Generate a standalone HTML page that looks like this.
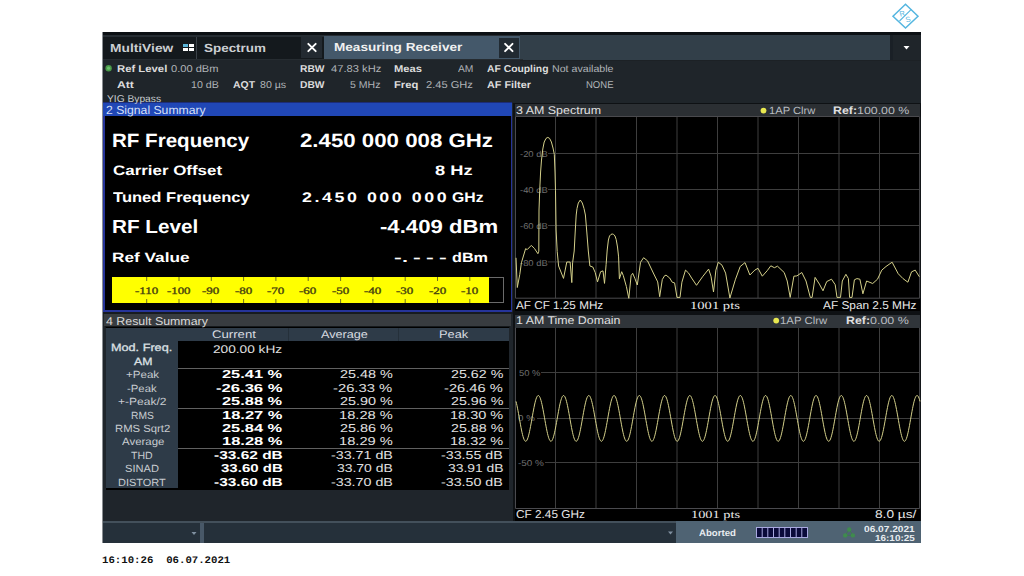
<!DOCTYPE html>
<html><head><meta charset="utf-8"><style>
html,body{margin:0;padding:0;width:1024px;height:576px;overflow:hidden;background:#fff}
#r>div{position:absolute}
.t{position:absolute;line-height:20px;white-space:pre;transform-origin:0 0;text-rendering:geometricPrecision}
svg{position:absolute;left:0;top:0}
</style></head><body><div id="r">
<div style="left:103px;top:32px;width:818px;height:511px;background:#1f252a;"></div>
<div style="left:103px;top:32px;width:818px;height:3px;background:#0c1014;"></div>
<div style="left:103px;top:35px;width:420px;height:2px;background:#262d33;"></div>
<div style="left:103px;top:37px;width:420px;height:22px;background:#14191d;"></div>
<div style="left:196px;top:37px;width:1px;height:22px;background:#3a4148;"></div>
<div style="left:301px;top:37px;width:21px;height:21px;background:#232a31;"></div>
<div style="left:324px;top:36px;width:196px;height:23px;background:#44586a;"></div>
<div style="left:499px;top:38px;width:20px;height:20px;background:#212a32;"></div>
<div style="left:520px;top:35px;width:370px;height:25px;background:#323f49;"></div>
<div style="left:890px;top:35px;width:31px;height:25px;background:#1f252a;"></div>
<div style="left:890px;top:35px;width:3px;height:25px;background:#1a2026;"></div>
<div style="left:103px;top:59px;width:420px;height:1px;background:#262c31;"></div>
<div style="left:520px;top:60px;width:401px;height:1px;background:#1c2125;"></div>
<div style="left:102px;top:102px;width:410px;height:211px;background:#1a1e22;"></div>
<div style="left:103px;top:102px;width:409px;height:210px;background:#26349a;"></div>
<div style="left:105px;top:116px;width:406px;height:194px;background:#000000;"></div>
<div style="left:103px;top:102px;width:409px;height:1px;background:#1c2c78;"></div>
<div style="left:103px;top:103px;width:409px;height:13px;background:#2047b6;"></div>
<div style="left:513px;top:103px;width:408px;height:209px;background:#0e1114;"></div>
<div style="left:515px;top:104px;width:405px;height:12px;background:#2b2f33;"></div>
<div style="left:515px;top:116px;width:405px;height:195px;background:#000000;"></div>
<div style="left:102px;top:312px;width:411px;height:209px;background:#1f252b;"></div>
<div style="left:102px;top:312px;width:411px;height:2px;background:#171b1f;"></div>
<div style="left:104px;top:314px;width:407px;height:12px;background:#383c40;"></div>
<div style="left:105px;top:326px;width:405px;height:2px;background:#15191c;"></div>
<div style="left:106px;top:327px;width:403px;height:163px;background:#000000;"></div>
<div style="left:106px;top:328px;width:72px;height:160px;background:#2e3b48;"></div>
<div style="left:178px;top:328px;width:331px;height:13px;background:#2e3b48;"></div>
<div style="left:288px;top:328px;width:1px;height:13px;background:#25303a;"></div>
<div style="left:398px;top:328px;width:1px;height:13px;background:#25303a;"></div>
<div style="left:178px;top:368px;width:331px;height:1px;background:#606060;"></div>
<div style="left:178px;top:408px;width:331px;height:1px;background:#606060;"></div>
<div style="left:178px;top:448px;width:331px;height:1px;background:#606060;"></div>
<div style="left:513px;top:312px;width:408px;height:209px;background:#0e1114;"></div>
<div style="left:515px;top:314.5px;width:405px;height:13.3px;background:#30353a;"></div>
<div style="left:515px;top:327.8px;width:405px;height:193.2px;background:#000000;"></div>
<div style="left:103px;top:521px;width:818px;height:22px;background:#25303a;"></div>
<div style="left:103px;top:521px;width:818px;height:2px;background:#43505b;"></div>
<div style="left:200px;top:523px;width:4px;height:20px;background:#485868;"></div>
<div style="left:676px;top:521px;width:245px;height:22px;background:#4f6373;"></div>
<div style="left:112px;top:277px;width:392px;height:26px;background:#6a6a6a;"></div>
<div style="left:112px;top:277px;width:377px;height:26px;background:#ffff00;"></div>
<div style="left:489px;top:278px;width:14px;height:24px;background:#000000;"></div>
<div style="left:102px;top:32px;width:1px;height:511px;background:#8a8e92;"></div>
</div>
<svg width="1024" height="576" viewBox="0 0 1024 576"><path d="M905.5 4.2 L918 16.3 L905.5 28 L893 16.3 Z" fill="none" stroke="#55b6e0" stroke-width="1.5"/><path d="M911.3 9.3 L899.5 21" stroke="#55b6e0" stroke-width="1.1"/><text x="0" y="0" transform="translate(900.2 16.8) rotate(-15)" font-family="Liberation Sans" font-size="7.5" fill="#55b6e0">R</text><text x="0" y="0" transform="translate(906.2 22.6) rotate(-15)" font-family="Liberation Sans" font-size="7.5" fill="#55b6e0">S</text><path d="M903.5 46 L909.5 46 L906.5 49.5 Z" fill="#ffffff"/><path d="M191.5 532 L196.5 532 L194 535 Z" fill="#8090a0"/><path d="M668 531.5 L673 531.5 L670.5 534.5 Z" fill="#8090a0"/><g stroke="#ffffff" stroke-width="1.9" stroke-linecap="round"><path d="M308.3 43.8 L315.7 51.2 M315.7 43.8 L308.3 51.2"/><path d="M505.1 43.8 L512.5 51.2 M512.5 43.8 L505.1 51.2"/></g><rect x="183" y="44" width="5" height="3" fill="#5ab4d8"/><rect x="189" y="44" width="5" height="3" fill="#fff"/><rect x="183" y="48" width="5" height="3" fill="#fff"/><rect x="189" y="48" width="5" height="3" fill="#fff"/><circle cx="108.6" cy="68.2" r="3.2" fill="#4a9a4a"/><circle cx="108.6" cy="68.2" r="1.6" fill="#6cc06c"/><circle cx="763.5" cy="110.6" r="2.9" fill="#e8e850"/><circle cx="776.2" cy="320.6" r="2.9" fill="#e8e850"/><path d="M146.7 277 V281 M146.7 299 V303 M179.0 277 V281 M179.0 299 V303 M211.3 277 V281 M211.3 299 V303 M243.6 277 V281 M243.6 299 V303 M275.9 277 V281 M275.9 299 V303 M308.2 277 V281 M308.2 299 V303 M340.6 277 V281 M340.6 299 V303 M372.9 277 V281 M372.9 299 V303 M405.2 277 V281 M405.2 299 V303 M437.5 277 V281 M437.5 299 V303 M469.8 277 V281 M469.8 299 V303 " stroke="#707020" stroke-width="1" fill="none"/><path d="M555.50 116.5 V298.2 M596.00 116.5 V298.2 M636.50 116.5 V298.2 M677.00 116.5 V298.2 M717.50 116.5 V298.2 M758.00 116.5 V298.2 M798.50 116.5 V298.2 M839.00 116.5 V298.2 M879.50 116.5 V298.2 M515.5 153.5 H919.6 M515.5 189.5 H919.6 M515.5 225.5 H919.6 M515.5 261.9 H919.6 M555.50 327.8 V508.5 M596.00 327.8 V508.5 M636.50 327.8 V508.5 M677.00 327.8 V508.5 M717.50 327.8 V508.5 M758.00 327.8 V508.5 M798.50 327.8 V508.5 M839.00 327.8 V508.5 M879.50 327.8 V508.5 M515.5 372.5 H919.6 M515.5 418.5 H919.6 M515.5 462.5 H919.6 " stroke="#3e3e3e" stroke-width="1" fill="none"/><path d="M515.5 116.5 V298.2 M515.5 116.5 H919.6 M515.5 298.2 H919.6 M919.6 116.5 V298.2 M515.5 327.8 V508.5 M515.5 508.5 H919.6 M919.6 327.8 V508.5 " stroke="#4a4a4e" stroke-width="1" fill="none"/><rect x="756.5" y="527.5" width="51" height="10" fill="#0a0a3a" stroke="#a8a8e0" stroke-width="1"/><path d="M762.2 527.5 V537.5" stroke="#a8a8e0" stroke-width="1"/><path d="M767.8 527.5 V537.5" stroke="#a8a8e0" stroke-width="1"/><path d="M773.5 527.5 V537.5" stroke="#a8a8e0" stroke-width="1"/><path d="M779.2 527.5 V537.5" stroke="#a8a8e0" stroke-width="1"/><path d="M784.8 527.5 V537.5" stroke="#a8a8e0" stroke-width="1"/><path d="M790.5 527.5 V537.5" stroke="#a8a8e0" stroke-width="1"/><path d="M796.2 527.5 V537.5" stroke="#a8a8e0" stroke-width="1"/><path d="M801.8 527.5 V537.5" stroke="#a8a8e0" stroke-width="1"/><path d="M849.2 529.5 L845.2 535.4 M849.2 529.5 L852.9 535.4 M845.2 535.4 H852.9" stroke="#3d7a50" stroke-width="1" fill="none"/><g fill="#3f8f4c" opacity="0.9"><circle cx="849.2" cy="529.5" r="2.2"/><circle cx="845.2" cy="535.4" r="2.2"/><circle cx="852.9" cy="535.4" r="2.2"/></g></svg>
<div style="position:absolute;left:516px;top:148px;width:32px;height:10px;background:#000000"></div>
<div style="position:absolute;left:516px;top:185px;width:32px;height:10px;background:#000000"></div>
<div style="position:absolute;left:516px;top:221px;width:32px;height:10px;background:#000000"></div>
<div style="position:absolute;left:516px;top:257px;width:32px;height:10px;background:#000000"></div>
<div style="position:absolute;left:516px;top:367px;width:25px;height:10px;background:#000000"></div>
<div style="position:absolute;left:516px;top:413px;width:21px;height:10px;background:#000000"></div>
<div style="position:absolute;left:516px;top:458px;width:29px;height:10px;background:#000000"></div>
<span class="t" style="left:109.86px;top:38px;color:#cccfd2;font-family:'Liberation Sans', sans-serif;font-size:11.8px;font-weight:700;transform:scaleX(1.1672);">MultiView</span>
<span class="t" style="left:203.82px;top:38px;color:#cccfd2;font-family:'Liberation Sans', sans-serif;font-size:11.8px;font-weight:700;transform:scaleX(1.1382);">Spectrum</span>
<span class="t" style="left:333.67px;top:37px;color:#f0f0f0;font-family:'Liberation Sans', sans-serif;font-size:11.8px;font-weight:700;transform:scaleX(1.1507);">Measuring Receiver</span>
<span class="t" style="left:116.89px;top:60px;color:#dcdcdc;font-family:'Liberation Sans', sans-serif;font-size:10px;font-weight:700;transform:scaleX(1.1314);">Ref Level</span>
<span class="t" style="left:171.13px;top:60px;color:#b0b4b8;font-family:'Liberation Sans', sans-serif;font-size:10px;transform:scaleX(1.1091);">0.00 dBm</span>
<span class="t" style="left:117.10px;top:76px;color:#dcdcdc;font-family:'Liberation Sans', sans-serif;font-size:10px;font-weight:700;transform:scaleX(1.2182);">Att</span>
<span class="t" style="left:190.81px;top:76px;color:#b0b4b8;font-family:'Liberation Sans', sans-serif;font-size:10px;transform:scaleX(1.0656);">10 dB</span>
<span class="t" style="left:232.77px;top:76px;color:#dcdcdc;font-family:'Liberation Sans', sans-serif;font-size:10px;font-weight:700;transform:scaleX(1.0424);">AQT</span>
<span class="t" style="left:259.94px;top:76px;color:#b0b4b8;font-family:'Liberation Sans', sans-serif;font-size:10px;transform:scaleX(1.0601);">80 µs</span>
<span class="t" style="left:299.65px;top:60px;color:#dcdcdc;font-family:'Liberation Sans', sans-serif;font-size:10px;font-weight:700;transform:scaleX(1.0268);">RBW</span>
<span class="t" style="left:330.51px;top:60px;color:#b0b4b8;font-family:'Liberation Sans', sans-serif;font-size:10px;transform:scaleX(1.1170);">47.83 kHz</span>
<span class="t" style="left:299.65px;top:76px;color:#dcdcdc;font-family:'Liberation Sans', sans-serif;font-size:10px;font-weight:700;transform:scaleX(1.0268);">DBW</span>
<span class="t" style="left:350.23px;top:76px;color:#b0b4b8;font-family:'Liberation Sans', sans-serif;font-size:10px;transform:scaleX(1.0522);">5 MHz</span>
<span class="t" style="left:393.59px;top:60px;color:#dcdcdc;font-family:'Liberation Sans', sans-serif;font-size:10px;font-weight:700;transform:scaleX(1.1168);">Meas</span>
<span class="t" style="left:457.68px;top:60px;color:#b0b4b8;font-family:'Liberation Sans', sans-serif;font-size:10px;transform:scaleX(1.0285);">AM</span>
<span class="t" style="left:393.59px;top:76px;color:#dcdcdc;font-family:'Liberation Sans', sans-serif;font-size:10px;font-weight:700;transform:scaleX(1.1243);">Freq</span>
<span class="t" style="left:426.21px;top:76px;color:#b0b4b8;font-family:'Liberation Sans', sans-serif;font-size:10px;transform:scaleX(1.1105);">2.45 GHz</span>
<span class="t" style="left:486.57px;top:60px;color:#dcdcdc;font-family:'Liberation Sans', sans-serif;font-size:10px;font-weight:700;transform:scaleX(1.0351);">AF Coupling</span>
<span class="t" style="left:551.91px;top:60px;color:#b0b4b8;font-family:'Liberation Sans', sans-serif;font-size:10px;transform:scaleX(1.0643);">Not available</span>
<span class="t" style="left:486.55px;top:76px;color:#dcdcdc;font-family:'Liberation Sans', sans-serif;font-size:10px;font-weight:700;transform:scaleX(1.0828);">AF Filter</span>
<span class="t" style="left:585.89px;top:76px;color:#b0b4b8;font-family:'Liberation Sans', sans-serif;font-size:10px;transform:scaleX(0.9517);">NONE</span>
<span class="t" style="left:107.31px;top:90px;color:#c8ccd0;font-family:'Liberation Sans', sans-serif;font-size:10px;transform:scaleX(1.0229);">YIG Bypass</span>
<span class="t" style="left:106.41px;top:100px;color:#d8e0f8;font-family:'Liberation Sans', sans-serif;font-size:11.8px;transform:scaleX(1.0343);">2 Signal Summary</span>
<span class="t" style="left:112.37px;top:132px;color:#fff;font-family:'Liberation Sans', sans-serif;font-size:19.3px;font-weight:700;transform:scaleX(1.0665);">RF Frequency</span>
<span class="t" style="left:299.87px;top:132px;color:#fff;font-family:'Liberation Sans', sans-serif;font-size:19.3px;font-weight:700;transform:scaleX(1.1540);">2.450 000 008 GHz</span>
<span class="t" style="left:112.74px;top:161px;color:#fff;font-family:'Liberation Sans', sans-serif;font-size:13.7px;font-weight:700;transform:scaleX(1.2360);">Carrier Offset</span>
<span class="t" style="left:435.20px;top:161px;color:#fff;font-family:'Liberation Sans', sans-serif;font-size:13.7px;font-weight:700;transform:scaleX(1.3352);">8 Hz</span>
<span class="t" style="left:113.08px;top:187px;color:#fff;font-family:'Liberation Sans', sans-serif;font-size:14.1px;font-weight:700;transform:scaleX(1.1744);">Tuned Frequency</span>
<span class="t" style="left:301.82px;top:188px;color:#fff;font-family:'Liberation Sans', sans-serif;font-size:13.8px;font-weight:700;letter-spacing:2.0px;transform:scaleX(1.2888);">2.450 000 000</span>
<span class="t" style="left:452.19px;top:188px;color:#fff;font-family:'Liberation Sans', sans-serif;font-size:13.8px;font-weight:700;transform:scaleX(1.1449);">GHz</span>
<span class="t" style="left:112.20px;top:218px;color:#fff;font-family:'Liberation Sans', sans-serif;font-size:18.9px;font-weight:700;transform:scaleX(1.0956);">RF Level</span>
<span class="t" style="left:380.30px;top:218px;color:#fff;font-family:'Liberation Sans', sans-serif;font-size:18.9px;font-weight:700;transform:scaleX(1.1720);">-4.409 dBm</span>
<span class="t" style="left:111.95px;top:248px;color:#fff;font-family:'Liberation Sans', sans-serif;font-size:13.5px;font-weight:700;transform:scaleX(1.2767);">Ref Value</span>
<span class="t" style="left:393.74px;top:248px;color:#fff;font-family:'Liberation Sans', sans-serif;font-size:13.5px;font-weight:700;transform:scaleX(1.7214);">-</span>
<span class="t" style="left:413.24px;top:248px;color:#fff;font-family:'Liberation Sans', sans-serif;font-size:13.5px;font-weight:700;transform:scaleX(1.7214);">-</span>
<span class="t" style="left:425.94px;top:248px;color:#fff;font-family:'Liberation Sans', sans-serif;font-size:13.5px;font-weight:700;transform:scaleX(1.7214);">-</span>
<span class="t" style="left:438.64px;top:248px;color:#fff;font-family:'Liberation Sans', sans-serif;font-size:13.5px;font-weight:700;transform:scaleX(1.7214);">-</span>
<span class="t" style="left:401.67px;top:248px;color:#fff;font-family:'Liberation Sans', sans-serif;font-size:13.5px;font-weight:700;transform:scaleX(1.6076);">.</span>
<span class="t" style="left:452.16px;top:248px;color:#fff;font-family:'Liberation Sans', sans-serif;font-size:13.5px;font-weight:700;transform:scaleX(1.2007);">dBm</span>
<span class="t" style="left:134.70px;top:282px;color:#48440e;font-family:'Liberation Serif', serif;font-size:9.8px;-webkit-text-stroke:0.35px #48440e;transform:scaleX(1.3268);">-110</span>
<span class="t" style="left:167.02px;top:282px;color:#48440e;font-family:'Liberation Serif', serif;font-size:9.8px;-webkit-text-stroke:0.35px #48440e;transform:scaleX(1.3113);">-100</span>
<span class="t" style="left:202.42px;top:282px;color:#48440e;font-family:'Liberation Serif', serif;font-size:9.8px;-webkit-text-stroke:0.35px #48440e;transform:scaleX(1.3292);">-90</span>
<span class="t" style="left:234.73px;top:282px;color:#48440e;font-family:'Liberation Serif', serif;font-size:9.8px;-webkit-text-stroke:0.35px #48440e;transform:scaleX(1.3292);">-80</span>
<span class="t" style="left:267.04px;top:282px;color:#48440e;font-family:'Liberation Serif', serif;font-size:9.8px;-webkit-text-stroke:0.35px #48440e;transform:scaleX(1.3292);">-70</span>
<span class="t" style="left:299.35px;top:282px;color:#48440e;font-family:'Liberation Serif', serif;font-size:9.8px;-webkit-text-stroke:0.35px #48440e;transform:scaleX(1.3292);">-60</span>
<span class="t" style="left:331.66px;top:282px;color:#48440e;font-family:'Liberation Serif', serif;font-size:9.8px;-webkit-text-stroke:0.35px #48440e;transform:scaleX(1.3292);">-50</span>
<span class="t" style="left:363.97px;top:282px;color:#48440e;font-family:'Liberation Serif', serif;font-size:9.8px;-webkit-text-stroke:0.35px #48440e;transform:scaleX(1.3292);">-40</span>
<span class="t" style="left:396.28px;top:282px;color:#48440e;font-family:'Liberation Serif', serif;font-size:9.8px;-webkit-text-stroke:0.35px #48440e;transform:scaleX(1.3292);">-30</span>
<span class="t" style="left:428.59px;top:282px;color:#48440e;font-family:'Liberation Serif', serif;font-size:9.8px;-webkit-text-stroke:0.35px #48440e;transform:scaleX(1.3292);">-20</span>
<span class="t" style="left:460.90px;top:282px;color:#48440e;font-family:'Liberation Serif', serif;font-size:9.8px;-webkit-text-stroke:0.35px #48440e;transform:scaleX(1.3292);">-10</span>
<span class="t" style="left:105.81px;top:312px;color:#d8d8d8;font-family:'Liberation Sans', sans-serif;font-size:11.3px;transform:scaleX(1.0967);">4 Result Summary</span>
<span class="t" style="left:211.56px;top:325px;color:#d8dce0;font-family:'Liberation Sans', sans-serif;font-size:11px;transform:scaleX(1.1963);">Current</span>
<span class="t" style="left:320.67px;top:325px;color:#d8dce0;font-family:'Liberation Sans', sans-serif;font-size:11px;transform:scaleX(1.1506);">Average</span>
<span class="t" style="left:438.72px;top:325px;color:#d8dce0;font-family:'Liberation Sans', sans-serif;font-size:11px;transform:scaleX(1.1651);">Peak</span>
<span class="t" style="left:111.22px;top:338px;color:#dce0e4;font-family:'Liberation Sans', sans-serif;font-size:10.6px;-webkit-text-stroke:0.3px #dce0e4;transform:scaleX(1.1945);">Mod. Freq.</span>
<span class="t" style="left:133.87px;top:352px;color:#dce0e4;font-family:'Liberation Sans', sans-serif;font-size:10.6px;-webkit-text-stroke:0.3px #dce0e4;transform:scaleX(1.1563);">AM</span>
<span class="t" style="left:212.94px;top:340px;color:#e0e0e0;font-family:'Liberation Sans', sans-serif;font-size:11px;transform:scaleX(1.2419);">200.00 kHz</span>
<span class="t" style="left:125.53px;top:366px;color:#c8ccd0;font-family:'Liberation Sans', sans-serif;font-size:10.4px;transform:scaleX(1.1122);">+Peak</span>
<span class="t" style="left:222.14px;top:365px;color:#fff;font-family:'Liberation Sans', sans-serif;font-size:11.5px;font-weight:700;transform:scaleX(1.4252);">25.41 %</span>
<span class="t" style="left:339.78px;top:365px;color:#e0e0e0;font-family:'Liberation Sans', sans-serif;font-size:11.5px;transform:scaleX(1.2542);">25.48 %</span>
<span class="t" style="left:450.79px;top:365px;color:#e0e0e0;font-family:'Liberation Sans', sans-serif;font-size:11.5px;transform:scaleX(1.2396);">25.62 %</span>
<span class="t" style="left:127.21px;top:380px;color:#c8ccd0;font-family:'Liberation Sans', sans-serif;font-size:10.4px;transform:scaleX(1.0907);">-Peak</span>
<span class="t" style="left:215.73px;top:379px;color:#fff;font-family:'Liberation Sans', sans-serif;font-size:11.5px;font-weight:700;transform:scaleX(1.4446);">-26.36 %</span>
<span class="t" style="left:333.46px;top:379px;color:#e0e0e0;font-family:'Liberation Sans', sans-serif;font-size:11.5px;transform:scaleX(1.2857);">-26.33 %</span>
<span class="t" style="left:444.27px;top:379px;color:#e0e0e0;font-family:'Liberation Sans', sans-serif;font-size:11.5px;transform:scaleX(1.2768);">-26.46 %</span>
<span class="t" style="left:118.31px;top:393px;color:#c8ccd0;font-family:'Liberation Sans', sans-serif;font-size:10.4px;transform:scaleX(1.1569);">+-Peak/2</span>
<span class="t" style="left:222.14px;top:392px;color:#fff;font-family:'Liberation Sans', sans-serif;font-size:11.5px;font-weight:700;transform:scaleX(1.4252);">25.88 %</span>
<span class="t" style="left:339.78px;top:392px;color:#e0e0e0;font-family:'Liberation Sans', sans-serif;font-size:11.5px;transform:scaleX(1.2542);">25.90 %</span>
<span class="t" style="left:450.79px;top:392px;color:#e0e0e0;font-family:'Liberation Sans', sans-serif;font-size:11.5px;transform:scaleX(1.2396);">25.96 %</span>
<span class="t" style="left:130.52px;top:407px;color:#c8ccd0;font-family:'Liberation Sans', sans-serif;font-size:10.4px;transform:scaleX(0.9889);">RMS</span>
<span class="t" style="left:221.74px;top:406px;color:#fff;font-family:'Liberation Sans', sans-serif;font-size:11.5px;font-weight:700;transform:scaleX(1.4347);">18.27 %</span>
<span class="t" style="left:338.90px;top:406px;color:#e0e0e0;font-family:'Liberation Sans', sans-serif;font-size:11.5px;transform:scaleX(1.2752);">18.28 %</span>
<span class="t" style="left:449.92px;top:406px;color:#e0e0e0;font-family:'Liberation Sans', sans-serif;font-size:11.5px;transform:scaleX(1.2604);">18.30 %</span>
<span class="t" style="left:114.62px;top:420px;color:#c8ccd0;font-family:'Liberation Sans', sans-serif;font-size:10.4px;transform:scaleX(1.0869);">RMS Sqrt2</span>
<span class="t" style="left:222.14px;top:419px;color:#fff;font-family:'Liberation Sans', sans-serif;font-size:11.5px;font-weight:700;transform:scaleX(1.4252);">25.84 %</span>
<span class="t" style="left:339.78px;top:419px;color:#e0e0e0;font-family:'Liberation Sans', sans-serif;font-size:11.5px;transform:scaleX(1.2542);">25.86 %</span>
<span class="t" style="left:450.79px;top:419px;color:#e0e0e0;font-family:'Liberation Sans', sans-serif;font-size:11.5px;transform:scaleX(1.2396);">25.88 %</span>
<span class="t" style="left:121.58px;top:433px;color:#c8ccd0;font-family:'Liberation Sans', sans-serif;font-size:10.4px;transform:scaleX(1.1014);">Average</span>
<span class="t" style="left:221.74px;top:432px;color:#fff;font-family:'Liberation Sans', sans-serif;font-size:11.5px;font-weight:700;transform:scaleX(1.4347);">18.28 %</span>
<span class="t" style="left:338.90px;top:432px;color:#e0e0e0;font-family:'Liberation Sans', sans-serif;font-size:11.5px;transform:scaleX(1.2752);">18.29 %</span>
<span class="t" style="left:449.92px;top:432px;color:#e0e0e0;font-family:'Liberation Sans', sans-serif;font-size:11.5px;transform:scaleX(1.2604);">18.32 %</span>
<span class="t" style="left:131.19px;top:447px;color:#c8ccd0;font-family:'Liberation Sans', sans-serif;font-size:10.4px;transform:scaleX(1.0127);">THD</span>
<span class="t" style="left:213.69px;top:446px;color:#fff;font-family:'Liberation Sans', sans-serif;font-size:11.5px;font-weight:700;transform:scaleX(1.3454);">-33.62 dB</span>
<span class="t" style="left:330.80px;top:446px;color:#e0e0e0;font-family:'Liberation Sans', sans-serif;font-size:11.5px;transform:scaleX(1.2407);">-33.71 dB</span>
<span class="t" style="left:441.30px;top:446px;color:#e0e0e0;font-family:'Liberation Sans', sans-serif;font-size:11.5px;transform:scaleX(1.2386);">-33.55 dB</span>
<span class="t" style="left:124.82px;top:460px;color:#c8ccd0;font-family:'Liberation Sans', sans-serif;font-size:10.4px;transform:scaleX(1.0670);">SINAD</span>
<span class="t" style="left:220.58px;top:459px;color:#fff;font-family:'Liberation Sans', sans-serif;font-size:11.5px;font-weight:700;transform:scaleX(1.3080);">33.60 dB</span>
<span class="t" style="left:337.15px;top:459px;color:#e0e0e0;font-family:'Liberation Sans', sans-serif;font-size:11.5px;transform:scaleX(1.2100);">33.70 dB</span>
<span class="t" style="left:447.65px;top:459px;color:#e0e0e0;font-family:'Liberation Sans', sans-serif;font-size:11.5px;transform:scaleX(1.2078);">33.91 dB</span>
<span class="t" style="left:117.85px;top:474px;color:#c8ccd0;font-family:'Liberation Sans', sans-serif;font-size:10.4px;transform:scaleX(1.0551);">DISTORT</span>
<span class="t" style="left:213.69px;top:473px;color:#fff;font-family:'Liberation Sans', sans-serif;font-size:11.5px;font-weight:700;transform:scaleX(1.3454);">-33.60 dB</span>
<span class="t" style="left:330.80px;top:473px;color:#e0e0e0;font-family:'Liberation Sans', sans-serif;font-size:11.5px;transform:scaleX(1.2407);">-33.70 dB</span>
<span class="t" style="left:441.30px;top:473px;color:#e0e0e0;font-family:'Liberation Sans', sans-serif;font-size:11.5px;transform:scaleX(1.2386);">-33.50 dB</span>
<span class="t" style="left:516.22px;top:101px;color:#e0e0e0;font-family:'Liberation Sans', sans-serif;font-size:11.2px;transform:scaleX(1.1124);">3 AM Spectrum</span>
<span class="t" style="left:768.50px;top:102px;color:#b8bcc0;font-family:'Liberation Sans', sans-serif;font-size:10.4px;transform:scaleX(1.0751);">1AP Clrw</span>
<span class="t" style="left:833.24px;top:101px;color:#e0e0e0;font-family:'Liberation Sans', sans-serif;font-size:10.8px;font-weight:700;transform:scaleX(1.1426);">Ref:</span>
<span class="t" style="left:856.96px;top:102px;color:#b8bcc0;font-family:'Liberation Sans', sans-serif;font-size:10.4px;transform:scaleX(1.1910);">100.00 %</span>
<span class="t" style="left:519.63px;top:144px;color:#707070;font-family:'Liberation Sans', sans-serif;font-size:8.5px;transform:scaleX(1.1041);">-20 dB</span>
<span class="t" style="left:519.63px;top:180px;color:#707070;font-family:'Liberation Sans', sans-serif;font-size:8.5px;transform:scaleX(1.1041);">-40 dB</span>
<span class="t" style="left:519.63px;top:216px;color:#707070;font-family:'Liberation Sans', sans-serif;font-size:8.5px;transform:scaleX(1.1041);">-60 dB</span>
<span class="t" style="left:519.63px;top:253px;color:#707070;font-family:'Liberation Sans', sans-serif;font-size:8.5px;transform:scaleX(1.1041);">-80 dB</span>
<span class="t" style="left:516.42px;top:296px;color:#e8e8e8;font-family:'Liberation Sans', sans-serif;font-size:11.3px;transform:scaleX(1.0368);">AF CF 1.25 MHz</span>
<span class="t" style="left:690.25px;top:296px;color:#e8e8e8;font-family:'Liberation Serif', serif;font-size:11px;transform:scaleX(1.3281);">1001 pts</span>
<span class="t" style="left:822.71px;top:296px;color:#e8e8e8;font-family:'Liberation Sans', sans-serif;font-size:11.3px;transform:scaleX(1.0483);">AF Span 2.5 MHz</span>
<span class="t" style="left:516.13px;top:311px;color:#e0e0e0;font-family:'Liberation Sans', sans-serif;font-size:11.2px;transform:scaleX(1.1056);">1 AM Time Domain</span>
<span class="t" style="left:780.37px;top:312px;color:#b8bcc0;font-family:'Liberation Sans', sans-serif;font-size:10.4px;transform:scaleX(1.0943);">1AP Clrw</span>
<span class="t" style="left:845.54px;top:311px;color:#e0e0e0;font-family:'Liberation Sans', sans-serif;font-size:10.8px;font-weight:700;transform:scaleX(1.1426);">Ref:</span>
<span class="t" style="left:870.47px;top:312px;color:#b8bcc0;font-family:'Liberation Sans', sans-serif;font-size:10.4px;transform:scaleX(1.2004);">0.00 %</span>
<span class="t" style="left:519.20px;top:363px;color:#707070;font-family:'Liberation Sans', sans-serif;font-size:8.5px;transform:scaleX(1.1041);">50 %</span>
<span class="t" style="left:517.99px;top:408px;color:#707070;font-family:'Liberation Sans', sans-serif;font-size:8.5px;transform:scaleX(1.1509);">0 %</span>
<span class="t" style="left:518.29px;top:453px;color:#707070;font-family:'Liberation Sans', sans-serif;font-size:8.5px;transform:scaleX(1.1688);">-50 %</span>
<span class="t" style="left:515.79px;top:505px;color:#e8e8e8;font-family:'Liberation Sans', sans-serif;font-size:11.3px;transform:scaleX(1.0448);">CF 2.45 GHz</span>
<span class="t" style="left:691.39px;top:505px;color:#e8e8e8;font-family:'Liberation Serif', serif;font-size:11px;transform:scaleX(1.3057);">1001 pts</span>
<span class="t" style="left:875.09px;top:505px;color:#e8e8e8;font-family:'Liberation Sans', sans-serif;font-size:11.3px;transform:scaleX(1.2100);">8.0 µs/</span>
<span class="t" style="left:698.59px;top:523px;color:#e8ecf0;font-family:'Liberation Sans', sans-serif;font-size:9.3px;font-weight:700;transform:scaleX(1.0358);">Aborted</span>
<span class="t" style="left:863.78px;top:519px;color:#e8ecf0;font-family:'Liberation Sans', sans-serif;font-size:8.8px;font-weight:700;transform:scaleX(1.1529);">06.07.2021</span>
<span class="t" style="left:875.03px;top:528px;color:#e8ecf0;font-family:'Liberation Sans', sans-serif;font-size:8.8px;font-weight:700;transform:scaleX(1.1306);">16:10:25</span>
<span class="t" style="left:101.87px;top:552px;color:#111111;font-family:'Liberation Mono', monospace;font-size:10px;font-weight:700;transform:scaleX(1.0688);">16:10:26  06.07.2021</span>
<svg width="1024" height="576" viewBox="0 0 1024 576"><polyline points="516.0,257.8 517.3,287.5 519.8,274.3 521.4,262.8 525.6,248.7 527.2,249.6 531.3,245.4 534.6,248.7 537.9,253.7 538.8,251.2 539.0,210.0 539.7,190.8 540.6,172.0 541.5,160.0 542.8,149.0 544.2,142.0 546.0,138.4 547.8,137.4 549.6,138.4 551.4,142.0 553.0,148.0 554.3,154.3 555.0,172.0 555.5,190.8 556.1,230.0 557.2,251.5 558.6,266.0 563.5,278.4 566.8,262.0 570.1,262.0 571.8,282.6 572.6,262.8 574.2,251.0 575.2,232.0 576.2,215.0 577.0,208.5 578.3,203.0 580.3,200.0 582.3,203.0 584.0,208.5 585.4,215.0 586.8,232.0 588.3,251.0 589.9,266.0 592.8,267.0 595.2,272.5 597.5,281.9 600.6,271.7 603.0,270.9 604.5,283.4 606.1,264.7 607.2,250.0 608.4,240.0 609.5,236.0 611.0,234.4 612.3,234.0 613.6,234.4 615.0,236.0 616.2,239.5 617.5,247.0 618.6,256.9 619.4,278.8 621.7,271.7 623.3,275.6 626.4,286.6 628.8,298.3 631.1,275.6 632.7,273.3 635.0,278.8 637.3,285.0 640.5,262.3 643.6,257.7 647.5,260.8 653.8,274.0 657.7,281.9 659.7,296.7 662.3,279.5 664.7,275.6 666.1,275.2 669.7,278.0 672.2,282.2 674.6,282.9 677.0,297.4 680.0,297.4 681.9,282.2 685.5,270.1 688.6,273.1 691.6,278.0 696.5,285.3 702.5,276.8 708.6,269.1 711.0,276.2 713.5,292.0 715.9,270.1 718.3,262.2 722.0,265.2 725.6,273.1 729.9,298.0 735.3,279.8 740.2,266.5 745.0,262.6 749.9,275.0 754.8,270.1 758.0,268.3 762.3,276.2 767.2,270.7 770.8,265.8 774.4,267.7 777.5,266.2 784.2,272.5 787.2,281.0 790.2,297.4 793.9,276.2 796.9,275.9 801.8,272.5 806.0,281.0 810.3,297.4 812.1,297.4 815.1,277.4 819.4,284.1 823.0,290.8 826.7,281.6 831.5,279.2 835.2,284.7 837.0,297.4 840.5,297.4 842.3,281.0 845.9,274.3 848.4,278.6 849.6,297.4 852.0,297.4 854.4,279.8 856.9,278.6 859.9,279.2 862.9,293.8 866.6,281.0 872.7,283.5 877.5,279.2 881.8,270.1 886.0,266.5 892.1,262.2 898.2,273.7 903.0,278.6 907.9,282.2 911.5,271.9 915.2,270.1 919.4,276.8" stroke="#d4d08a" stroke-width="1" fill="none" stroke-linejoin="round"/></svg>
<svg width="1024" height="576" viewBox="0 0 1024 576"><polyline points="516.0,401.40 516.5,403.43 517.0,405.70 517.5,408.16 518.0,410.78 518.5,413.52 519.0,416.34 519.5,419.18 520.0,422.02 520.5,424.80 521.0,427.48 521.5,430.01 522.0,432.37 522.5,434.52 523.0,436.41 523.5,438.03 524.0,439.34 524.5,440.33 525.0,440.98 525.5,441.28 526.0,441.23 526.5,440.82 527.0,440.07 527.5,438.98 528.0,437.57 528.5,435.87 529.0,433.90 529.5,431.69 530.0,429.27 530.5,426.68 531.0,423.97 531.5,421.17 532.0,418.33 532.5,415.49 533.0,412.69 533.5,409.98 534.0,407.41 534.5,405.00 535.0,402.80 535.5,400.84 536.0,399.15 536.5,397.76 537.0,396.69 537.5,395.95 538.0,395.56 538.5,395.53 539.0,395.85 539.5,396.51 540.0,397.52 540.5,398.85 541.0,400.48 541.5,402.38 542.0,404.54 542.5,406.91 543.0,409.46 543.5,412.14 544.0,414.92 544.5,417.76 545.0,420.60 545.5,423.42 546.0,426.15 546.5,428.76 547.0,431.22 547.5,433.47 548.0,435.50 548.5,437.26 549.0,438.72 549.5,439.88 550.0,440.70 550.5,441.17 551.0,441.30 551.5,441.07 552.0,440.49 552.5,439.56 553.0,438.31 553.5,436.76 554.0,434.92 554.5,432.82 555.0,430.50 555.5,428.00 556.0,425.34 556.5,422.58 557.0,419.75 557.5,416.91 558.0,414.08 558.5,411.32 559.0,408.68 559.5,406.18 560.0,403.87 560.5,401.78 561.0,399.96 561.5,398.42 562.0,397.18 562.5,396.28 563.0,395.71 563.5,395.50 564.0,395.64 564.5,396.14 565.0,396.97 565.5,398.14 566.0,399.63 566.5,401.40 567.0,403.43 567.5,405.70 568.0,408.16 568.5,410.78 569.0,413.52 569.5,416.34 570.0,419.18 570.5,422.02 571.0,424.80 571.5,427.48 572.0,430.01 572.5,432.37 573.0,434.52 573.5,436.41 574.0,438.03 574.5,439.34 575.0,440.33 575.5,440.98 576.0,441.28 576.5,441.23 577.0,440.82 577.5,440.07 578.0,438.98 578.5,437.57 579.0,435.87 579.5,433.90 580.0,431.69 580.5,429.27 581.0,426.68 581.5,423.97 582.0,421.17 582.5,418.33 583.0,415.49 583.5,412.69 584.0,409.98 584.5,407.41 585.0,405.00 585.5,402.80 586.0,400.84 586.5,399.15 587.0,397.76 587.5,396.69 588.0,395.95 588.5,395.56 589.0,395.53 589.5,395.85 590.0,396.51 590.5,397.52 591.0,398.85 591.5,400.48 592.0,402.38 592.5,404.54 593.0,406.91 593.5,409.46 594.0,412.14 594.5,414.92 595.0,417.76 595.5,420.60 596.0,423.42 596.5,426.15 597.0,428.76 597.5,431.22 598.0,433.47 598.5,435.50 599.0,437.26 599.5,438.72 600.0,439.88 600.5,440.70 601.0,441.17 601.5,441.30 602.0,441.07 602.5,440.49 603.0,439.56 603.5,438.31 604.0,436.76 604.5,434.92 605.0,432.82 605.5,430.50 606.0,428.00 606.5,425.34 607.0,422.58 607.5,419.75 608.0,416.91 608.5,414.08 609.0,411.32 609.5,408.68 610.0,406.18 610.5,403.87 611.0,401.78 611.5,399.96 612.0,398.42 612.5,397.18 613.0,396.28 613.5,395.71 614.0,395.50 614.5,395.64 615.0,396.14 615.5,396.97 616.0,398.14 616.5,399.63 617.0,401.40 617.5,403.43 618.0,405.70 618.5,408.16 619.0,410.78 619.5,413.52 620.0,416.34 620.5,419.18 621.0,422.02 621.5,424.80 622.0,427.48 622.5,430.01 623.0,432.37 623.5,434.52 624.0,436.41 624.5,438.03 625.0,439.34 625.5,440.33 626.0,440.98 626.5,441.28 627.0,441.23 627.5,440.82 628.0,440.07 628.5,438.98 629.0,437.57 629.5,435.87 630.0,433.90 630.5,431.69 631.0,429.27 631.5,426.68 632.0,423.97 632.5,421.17 633.0,418.33 633.5,415.49 634.0,412.69 634.5,409.98 635.0,407.41 635.5,405.00 636.0,402.80 636.5,400.84 637.0,399.15 637.5,397.76 638.0,396.69 638.5,395.95 639.0,395.56 639.5,395.53 640.0,395.85 640.5,396.51 641.0,397.52 641.5,398.85 642.0,400.48 642.5,402.38 643.0,404.54 643.5,406.91 644.0,409.46 644.5,412.14 645.0,414.92 645.5,417.76 646.0,420.60 646.5,423.42 647.0,426.15 647.5,428.76 648.0,431.22 648.5,433.47 649.0,435.50 649.5,437.26 650.0,438.72 650.5,439.88 651.0,440.70 651.5,441.17 652.0,441.30 652.5,441.07 653.0,440.49 653.5,439.56 654.0,438.31 654.5,436.76 655.0,434.92 655.5,432.82 656.0,430.50 656.5,428.00 657.0,425.34 657.5,422.58 658.0,419.75 658.5,416.91 659.0,414.08 659.5,411.32 660.0,408.68 660.5,406.18 661.0,403.87 661.5,401.78 662.0,399.96 662.5,398.42 663.0,397.18 663.5,396.28 664.0,395.71 664.5,395.50 665.0,395.64 665.5,396.14 666.0,396.97 666.5,398.14 667.0,399.63 667.5,401.40 668.0,403.43 668.5,405.70 669.0,408.16 669.5,410.78 670.0,413.52 670.5,416.34 671.0,419.18 671.5,422.02 672.0,424.80 672.5,427.48 673.0,430.01 673.5,432.37 674.0,434.52 674.5,436.41 675.0,438.03 675.5,439.34 676.0,440.33 676.5,440.98 677.0,441.28 677.5,441.23 678.0,440.82 678.5,440.07 679.0,438.98 679.5,437.57 680.0,435.87 680.5,433.90 681.0,431.69 681.5,429.27 682.0,426.68 682.5,423.97 683.0,421.17 683.5,418.33 684.0,415.49 684.5,412.69 685.0,409.98 685.5,407.41 686.0,405.00 686.5,402.80 687.0,400.84 687.5,399.15 688.0,397.76 688.5,396.69 689.0,395.95 689.5,395.56 690.0,395.53 690.5,395.85 691.0,396.51 691.5,397.52 692.0,398.85 692.5,400.48 693.0,402.38 693.5,404.54 694.0,406.91 694.5,409.46 695.0,412.14 695.5,414.92 696.0,417.76 696.5,420.60 697.0,423.42 697.5,426.15 698.0,428.76 698.5,431.22 699.0,433.47 699.5,435.50 700.0,437.26 700.5,438.72 701.0,439.88 701.5,440.70 702.0,441.17 702.5,441.30 703.0,441.07 703.5,440.49 704.0,439.56 704.5,438.31 705.0,436.76 705.5,434.92 706.0,432.82 706.5,430.50 707.0,428.00 707.5,425.34 708.0,422.58 708.5,419.75 709.0,416.91 709.5,414.08 710.0,411.32 710.5,408.68 711.0,406.18 711.5,403.87 712.0,401.78 712.5,399.96 713.0,398.42 713.5,397.18 714.0,396.28 714.5,395.71 715.0,395.50 715.5,395.64 716.0,396.14 716.5,396.97 717.0,398.14 717.5,399.63 718.0,401.40 718.5,403.43 719.0,405.70 719.5,408.16 720.0,410.78 720.5,413.52 721.0,416.34 721.5,419.18 722.0,422.02 722.5,424.80 723.0,427.48 723.5,430.01 724.0,432.37 724.5,434.52 725.0,436.41 725.5,438.03 726.0,439.34 726.5,440.33 727.0,440.98 727.5,441.28 728.0,441.23 728.5,440.82 729.0,440.07 729.5,438.98 730.0,437.57 730.5,435.87 731.0,433.90 731.5,431.69 732.0,429.27 732.5,426.68 733.0,423.97 733.5,421.17 734.0,418.33 734.5,415.49 735.0,412.69 735.5,409.98 736.0,407.41 736.5,405.00 737.0,402.80 737.5,400.84 738.0,399.15 738.5,397.76 739.0,396.69 739.5,395.95 740.0,395.56 740.5,395.53 741.0,395.85 741.5,396.51 742.0,397.52 742.5,398.85 743.0,400.48 743.5,402.38 744.0,404.54 744.5,406.91 745.0,409.46 745.5,412.14 746.0,414.92 746.5,417.76 747.0,420.60 747.5,423.42 748.0,426.15 748.5,428.76 749.0,431.22 749.5,433.47 750.0,435.50 750.5,437.26 751.0,438.72 751.5,439.88 752.0,440.70 752.5,441.17 753.0,441.30 753.5,441.07 754.0,440.49 754.5,439.56 755.0,438.31 755.5,436.76 756.0,434.92 756.5,432.82 757.0,430.50 757.5,428.00 758.0,425.34 758.5,422.58 759.0,419.75 759.5,416.91 760.0,414.08 760.5,411.32 761.0,408.68 761.5,406.18 762.0,403.87 762.5,401.78 763.0,399.96 763.5,398.42 764.0,397.18 764.5,396.28 765.0,395.71 765.5,395.50 766.0,395.64 766.5,396.14 767.0,396.97 767.5,398.14 768.0,399.63 768.5,401.40 769.0,403.43 769.5,405.70 770.0,408.16 770.5,410.78 771.0,413.52 771.5,416.34 772.0,419.18 772.5,422.02 773.0,424.80 773.5,427.48 774.0,430.01 774.5,432.37 775.0,434.52 775.5,436.41 776.0,438.03 776.5,439.34 777.0,440.33 777.5,440.98 778.0,441.28 778.5,441.23 779.0,440.82 779.5,440.07 780.0,438.98 780.5,437.57 781.0,435.87 781.5,433.90 782.0,431.69 782.5,429.27 783.0,426.68 783.5,423.97 784.0,421.17 784.5,418.33 785.0,415.49 785.5,412.69 786.0,409.98 786.5,407.41 787.0,405.00 787.5,402.80 788.0,400.84 788.5,399.15 789.0,397.76 789.5,396.69 790.0,395.95 790.5,395.56 791.0,395.53 791.5,395.85 792.0,396.51 792.5,397.52 793.0,398.85 793.5,400.48 794.0,402.38 794.5,404.54 795.0,406.91 795.5,409.46 796.0,412.14 796.5,414.92 797.0,417.76 797.5,420.60 798.0,423.42 798.5,426.15 799.0,428.76 799.5,431.22 800.0,433.47 800.5,435.50 801.0,437.26 801.5,438.72 802.0,439.88 802.5,440.70 803.0,441.17 803.5,441.30 804.0,441.07 804.5,440.49 805.0,439.56 805.5,438.31 806.0,436.76 806.5,434.92 807.0,432.82 807.5,430.50 808.0,428.00 808.5,425.34 809.0,422.58 809.5,419.75 810.0,416.91 810.5,414.08 811.0,411.32 811.5,408.68 812.0,406.18 812.5,403.87 813.0,401.78 813.5,399.96 814.0,398.42 814.5,397.18 815.0,396.28 815.5,395.71 816.0,395.50 816.5,395.64 817.0,396.14 817.5,396.97 818.0,398.14 818.5,399.63 819.0,401.40 819.5,403.43 820.0,405.70 820.5,408.16 821.0,410.78 821.5,413.52 822.0,416.34 822.5,419.18 823.0,422.02 823.5,424.80 824.0,427.48 824.5,430.01 825.0,432.37 825.5,434.52 826.0,436.41 826.5,438.03 827.0,439.34 827.5,440.33 828.0,440.98 828.5,441.28 829.0,441.23 829.5,440.82 830.0,440.07 830.5,438.98 831.0,437.57 831.5,435.87 832.0,433.90 832.5,431.69 833.0,429.27 833.5,426.68 834.0,423.97 834.5,421.17 835.0,418.33 835.5,415.49 836.0,412.69 836.5,409.98 837.0,407.41 837.5,405.00 838.0,402.80 838.5,400.84 839.0,399.15 839.5,397.76 840.0,396.69 840.5,395.95 841.0,395.56 841.5,395.53 842.0,395.85 842.5,396.51 843.0,397.52 843.5,398.85 844.0,400.48 844.5,402.38 845.0,404.54 845.5,406.91 846.0,409.46 846.5,412.14 847.0,414.92 847.5,417.76 848.0,420.60 848.5,423.42 849.0,426.15 849.5,428.76 850.0,431.22 850.5,433.47 851.0,435.50 851.5,437.26 852.0,438.72 852.5,439.88 853.0,440.70 853.5,441.17 854.0,441.30 854.5,441.07 855.0,440.49 855.5,439.56 856.0,438.31 856.5,436.76 857.0,434.92 857.5,432.82 858.0,430.50 858.5,428.00 859.0,425.34 859.5,422.58 860.0,419.75 860.5,416.91 861.0,414.08 861.5,411.32 862.0,408.68 862.5,406.18 863.0,403.87 863.5,401.78 864.0,399.96 864.5,398.42 865.0,397.18 865.5,396.28 866.0,395.71 866.5,395.50 867.0,395.64 867.5,396.14 868.0,396.97 868.5,398.14 869.0,399.63 869.5,401.40 870.0,403.43 870.5,405.70 871.0,408.16 871.5,410.78 872.0,413.52 872.5,416.34 873.0,419.18 873.5,422.02 874.0,424.80 874.5,427.48 875.0,430.01 875.5,432.37 876.0,434.52 876.5,436.41 877.0,438.03 877.5,439.34 878.0,440.33 878.5,440.98 879.0,441.28 879.5,441.23 880.0,440.82 880.5,440.07 881.0,438.98 881.5,437.57 882.0,435.87 882.5,433.90 883.0,431.69 883.5,429.27 884.0,426.68 884.5,423.97 885.0,421.17 885.5,418.33 886.0,415.49 886.5,412.69 887.0,409.98 887.5,407.41 888.0,405.00 888.5,402.80 889.0,400.84 889.5,399.15 890.0,397.76 890.5,396.69 891.0,395.95 891.5,395.56 892.0,395.53 892.5,395.85 893.0,396.51 893.5,397.52 894.0,398.85 894.5,400.48 895.0,402.38 895.5,404.54 896.0,406.91 896.5,409.46 897.0,412.14 897.5,414.92 898.0,417.76 898.5,420.60 899.0,423.42 899.5,426.15 900.0,428.76 900.5,431.22 901.0,433.47 901.5,435.50 902.0,437.26 902.5,438.72 903.0,439.88 903.5,440.70 904.0,441.17 904.5,441.30 905.0,441.07 905.5,440.49 906.0,439.56 906.5,438.31 907.0,436.76 907.5,434.92 908.0,432.82 908.5,430.50 909.0,428.00 909.5,425.34 910.0,422.58 910.5,419.75 911.0,416.91 911.5,414.08 912.0,411.32 912.5,408.68 913.0,406.18 913.5,403.87 914.0,401.78 914.5,399.96 915.0,398.42 915.5,397.18 916.0,396.28 916.5,395.71 917.0,395.50 917.5,395.64 918.0,396.14 918.5,396.97 919.0,398.14 919.5,399.63 920.0,401.40" stroke="#d4d08a" stroke-width="1" fill="none"/></svg>
</body></html>
